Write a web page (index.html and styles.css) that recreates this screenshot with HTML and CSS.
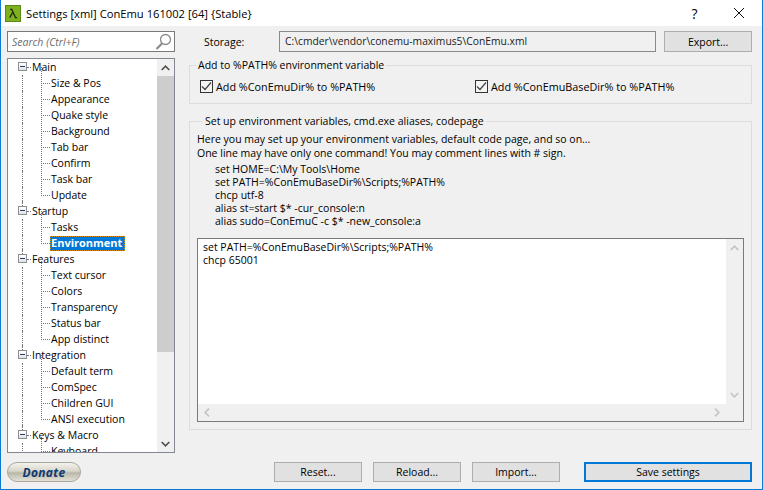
FILE: index.html
```html
<!DOCTYPE html>
<html lang="en">
<head>
<meta charset="utf-8">
<title>Settings</title>
<link rel="stylesheet" href="styles.css">
</head>
<body>
<div class="window">
  <header class="titlebar">
    <div class="appicon"><svg width="17" height="17" viewBox="0 0 17 17"><path d="M5 3.500h2L11.500 13.500h2M8 7.500L4.500 13.500" fill="none" stroke="#1c2a05" stroke-width="1.500"/></svg></div>
    <div class="title">Settings [xml] ConEmu 161002 [64] {Stable}</div>
    <div class="help">?</div>
    <div class="close"><svg width="12" height="12" viewBox="0 0 12 12"><path d="M1 1l10 10M11 1L1 11" stroke="#111" stroke-width="1" fill="none"/></svg></div>
  </header>
  <main class="content">
    <aside class="left">
      <div class="search">
        <span class="search-text">Search (Ctrl+F)</span>
        <svg width="18" height="18" viewBox="0 0 18 18"><circle cx="10.500" cy="6.500" r="5" fill="none" stroke="#8a8a8a" stroke-width="1.300"/><path d="M7 10.500L1.500 16" stroke="#8a8a8a" stroke-width="2.200"/></svg>
      </div>
      <div class="tree">
        <div class="tree-list">
          <div class="node root"><i class="box"></i>Main</div>
          <div class="node child">Size &amp; Pos</div>
          <div class="node child">Appearance</div>
          <div class="node child">Quake style</div>
          <div class="node child">Background</div>
          <div class="node child">Tab bar</div>
          <div class="node child">Confirm</div>
          <div class="node child">Task bar</div>
          <div class="node child last">Update</div>
          <div class="node root"><i class="box"></i>Startup</div>
          <div class="node child">Tasks</div>
          <div class="node child last"><span class="selected">Environment</span></div>
          <div class="node root"><i class="box"></i>Features</div>
          <div class="node child">Text cursor</div>
          <div class="node child">Colors</div>
          <div class="node child">Transparency</div>
          <div class="node child">Status bar</div>
          <div class="node child last">App distinct</div>
          <div class="node root"><i class="box"></i>Integration</div>
          <div class="node child">Default term</div>
          <div class="node child">ComSpec</div>
          <div class="node child">Children GUI</div>
          <div class="node child last">ANSI execution</div>
          <div class="node root"><i class="box"></i>Keys &amp; Macro</div>
          <div class="node child">Keyboard</div>
        </div>
        <div class="vscroll">
          <div class="arrow"><svg width="9" height="6" viewBox="0 0 9 6"><path d="M.7 5L4.500 1.200 8.300 5" fill="none" stroke="#505050" stroke-width="1.700"/></svg></div>
          <div class="thumb"></div>
          <div class="track"></div>
          <div class="arrow"><svg width="9" height="6" viewBox="0 0 9 6"><path d="M.7 1L4.500 4.800 8.300 1" fill="none" stroke="#505050" stroke-width="1.700"/></svg></div>
        </div>
      </div>
      <div class="donate-row"><button class="donate">Donate</button></div>
    </aside>
    <section class="right">
      <div class="storage-row">
        <span class="storage-label">Storage:</span>
        <div class="storage-field">C:\cmder\vendor\conemu-maximus5\ConEmu.xml</div>
        <button class="btn export">Export...</button>
      </div>
      <fieldset class="group path-group">
        <legend>Add to %PATH% environment variable</legend>
        <div class="checks">
          <label class="check"><i class="checkbox"><svg width="11" height="11" viewBox="0 0 11 11"><path d="M1 5.500L4 8.500 10 1.500" fill="none" stroke="#444" stroke-width="1.200"/></svg></i>Add %ConEmuDir% to %PATH%</label>
          <label class="check"><i class="checkbox"><svg width="11" height="11" viewBox="0 0 11 11"><path d="M1 5.500L4 8.500 10 1.500" fill="none" stroke="#444" stroke-width="1.200"/></svg></i>Add %ConEmuBaseDir% to %PATH%</label>
        </div>
      </fieldset>
      <fieldset class="group env-group">
        <legend>Set up environment variables, cmd.exe aliases, codepage</legend>
        <p class="intro">Here you may set up your environment variables, default code page, and so on...<br>One line may have only one command! You may comment lines with # sign.</p>
        <div class="sample">
          <div>set HOME=C:\My Tools\Home</div>
          <div>set PATH=%ConEmuBaseDir%\Scripts;%PATH%</div>
          <div>chcp utf-8</div>
          <div>alias st=start $* -cur_console:n</div>
          <div>alias sudo=ConEmuC -c $* -new_console:a</div>
        </div>
        <div class="editor">
          <div class="editor-text">set PATH=%ConEmuBaseDir%\Scripts;%PATH%<br>chcp 65001</div>
          <div class="ed-v">
            <svg width="9" height="6" viewBox="0 0 9 6"><path d="M.7 5L4.500 1.200 8.300 5" fill="none" stroke="#c4c4c4" stroke-width="1.700"/></svg>
            <svg width="9" height="6" viewBox="0 0 9 6"><path d="M.7 1L4.500 4.800 8.300 1" fill="none" stroke="#c4c4c4" stroke-width="1.700"/></svg>
          </div>
          <div class="ed-h">
            <svg width="6" height="9" viewBox="0 0 6 9"><path d="M5 .7L1.200 4.500 5 8.300" fill="none" stroke="#c4c4c4" stroke-width="1.700"/></svg>
            <svg width="6" height="9" viewBox="0 0 6 9"><path d="M1 .7L4.800 4.500 1 8.300" fill="none" stroke="#c4c4c4" stroke-width="1.700"/></svg>
          </div>
          <div class="ed-corner"></div>
        </div>
      </fieldset>
      <div class="actions">
        <button class="btn">Reset...</button>
        <button class="btn">Reload...</button>
        <button class="btn">Import...</button>
        <button class="btn save">Save settings</button>
      </div>
    </section>
  </main>
</div>
</body>
</html>
```
FILE: styles.css
```css
* { box-sizing: border-box; }
html, body { margin: 0; padding: 0; }
body { width: 763px; height: 490px; overflow: hidden; font-family: "Open Sans", sans-serif; font-size: 10.5px; color: #000; }
.window { width: 763px; height: 490px; display: flex; flex-direction: column; border: 1px solid #0a7ad6; border-top: 0; background: #f0f0f0; }
.titlebar { height: 26px; background: #fff; display: flex; align-items: center; padding-left: 4px; flex: none; }
.appicon { width: 16px; height: 17px; background: #7fb01f; border: 1px solid #5a8a14; display: flex; align-items: center; justify-content: center; overflow: hidden; }
.title { margin-left: 5px; flex: 1; font-size: 11.2px; white-space: nowrap; }
.help { width: 46px; padding-left: 3px; text-align: center; font-size: 14px; }
.close { width: 46px; display: flex; justify-content: center; }
.content { flex: 1; display: flex; padding: 5px 10px 0 6px; gap: 14px; min-height: 0; }
.left { width: 168px; flex: none; display: flex; flex-direction: column; }
.search { height: 21px; border: 1px solid #7a7a7a; background: #fff; display: flex; align-items: center; justify-content: space-between; padding: 0 1px 0 4px; }
.search-text { font-style: italic; color: #6d6d6d; }
.tree { margin-top: 6px; height: 395px; border: 1px solid #828790; background: #fff; display: flex; overflow: hidden; }
.tree-list { flex: 1; overflow: hidden; min-width: 0; }
.node { height: 16px; line-height: 16px; white-space: nowrap; position: relative; }
.root { padding-left: 24px; }
.child { padding-left: 43px; }
.box { position: absolute; left: 10px; top: 3px; width: 9px; height: 9px; border: 1px solid #8e8f8f; background: linear-gradient(#fff, #dfe3ea); z-index: 1; }
.box::after { content: ""; position: absolute; left: 1px; top: 3px; width: 5px; height: 1px; background: #2b3f66; }
.root::after { content: ""; position: absolute; left: 19px; top: 8px; width: 4px; border-top: 1px dotted #777; }
.child::before { content: ""; position: absolute; left: 14px; top: 0; height: 16px; border-left: 1px dotted #777; }
.child::after { content: ""; position: absolute; left: 33px; top: -8px; width: 8px; height: 16px; border-left: 1px dotted #777; border-bottom: 1px dotted #777; }
.root:not(:first-child)::before { content: ""; position: absolute; left: 14px; top: -3px; height: 6px; border-left: 1px dotted #777; }
.selected { display: inline-block; margin-left: -1px; padding: 0 1px; width: 75px; height: 15px; line-height: 14px; font-size: 11px; background: #0078d7; color: #fff; font-weight: 700; outline: 1px dotted #e08a00; outline-offset: -1px; }
.vscroll { width: 17px; flex: none; display: flex; flex-direction: column; background: #f0f0f0; }
.arrow { height: 17px; display: flex; align-items: center; justify-content: center; flex: none; }
.thumb { height: 276px; background: #cdcdcd; flex: none; }
.track { flex: 1; }
.donate-row { margin-top: 9px; }
.donate { width: 74px; height: 20px; padding: 0; border: 1px solid #a9a79b; border-radius: 10px; background: linear-gradient(#f4f3ed 0%, #d8d6c9 45%, #b9b7a9 55%, #e4e2d8 100%); color: #0f3a73; letter-spacing: .3px; font: italic 700 12px "Open Sans", sans-serif; }
.right { flex: 1; min-width: 0; display: flex; flex-direction: column; }
.storage-row { display: flex; align-items: center; height: 21px; flex: none; }
.storage-label { width: 90px; padding-left: 15px; flex: none; }
.storage-field { width: 378px; height: 21px; border: 1px solid #8a8a8a; background: #f0f0f0; line-height: 19px; padding-left: 5px; font-size: 10.3px; color: #222; }
.btn { width: 88px; height: 21px; padding: 0; border: 1px solid #adadad; background: #e1e1e1; font: 10.5px "Open Sans", sans-serif; color: #000; }
.export { margin-left: 8px; }
.group { margin: 0; padding: 0; border: 1px solid #dcdcdc; min-width: 0; }
.group legend { margin-left: 6px; padding: 0 2px; line-height: 14px; }
.path-group { margin-top: 6px; height: 46px; flex: none; }
.checks { display: flex; padding: 6px 0 0 10px; font-size: 10.8px; }
.check { display: flex; align-items: center; width: 275px; height: 16px; gap: 3px; }
.checkbox { width: 13px; height: 13px; border: 1px solid #333; background: #f4f4f4; display: flex; align-items: center; justify-content: center; flex: none; }
.env-group { margin-top: 10px; height: 316px; flex: none; padding: 0 7px 0 7px; }
.intro { margin: 4px 0 0; line-height: 14px; white-space: nowrap; }
.sample { margin: 3px 0 0 18px; line-height: 13px; white-space: nowrap; }
.editor { margin-top: 10px; height: 184px; border: 1px solid #7a7a7a; display: grid; grid-template-columns: 1fr 17px; grid-template-rows: 1fr 17px; background: #f0f0f0; }
.editor-text { background: #fff; padding: 2px 5px; line-height: 13px; }
.ed-v { display: flex; flex-direction: column; justify-content: space-between; align-items: center; padding: 6px 0 6px; }
.ed-h { display: flex; justify-content: space-between; align-items: center; padding: 0 6px; }
.actions { margin-top: auto; margin-bottom: 7px; display: flex; gap: 11px; padding-left: 85px; flex: none; }
.actions .btn { height: 20px; }
.actions .save { width: 168px; height: 20px; margin-left: 13px; border: 2px solid #0078d7; }
```
